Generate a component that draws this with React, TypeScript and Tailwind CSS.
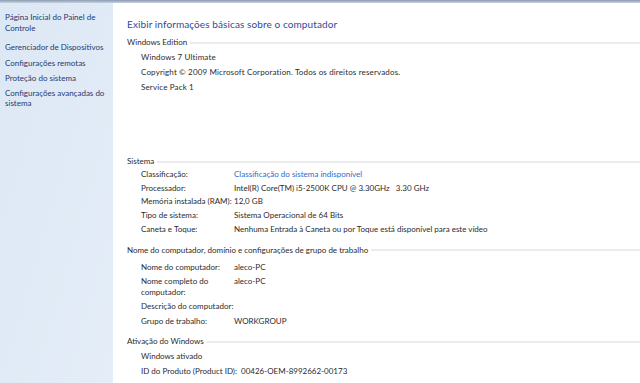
export default function App() {
  const sistema = [
    ["Classificação:", "Classificação do sistema indisponível", true],
    ["Processador:", "Intel(R) Core(TM) i5-2500K CPU @ 3.30GHz\u00a0\u00a0 3.30 GHz", false],
    ["Memória instalada (RAM):", "12,0 GB", false],
    ["Tipo de sistema:", "Sistema Operacional de 64 Bits", false],
    ["Caneta e Toque:", "Nenhuma Entrada à Caneta ou por Toque está disponível para este vídeo", false],
  ] as const;

  return (
    <div className="w-[640px] h-[383px] overflow-hidden bg-white text-[#2b2b2b] font-['Lato',sans-serif] text-[8px] flex flex-col">
      <div className="h-[3px] bg-gradient-to-b from-[#8a9bb2] to-[#c9d3df] shrink-0" />
      <div className="flex flex-1">
        <aside className="w-[113px] shrink-0 bg-gradient-to-br from-[#dde8f5] to-[#e4edf8] px-[5px] pt-[9px] text-[#1e3a6e] leading-[10.5px]">
          <div>Página Inicial do Painel de<br />Controle</div>
          <div className="mt-[9px] whitespace-nowrap">Gerenciador de Dispositivos</div>
          <div className="mt-[5px]">Configurações remotas</div>
          <div className="mt-[5px]">Proteção do sistema</div>
          <div className="mt-[4px]">Configurações avançadas do<br />sistema</div>
        </aside>
        <main className="flex-1 pl-[14px] whitespace-nowrap">
          <h1 className="text-[10px] text-[#2c4c9c] mt-[14px] leading-[14px] tracking-[0.1px]">
            Exibir informações básicas sobre o computador
          </h1>

          <Section title="Windows Edition" className="mt-[6px]" />
          <div className="pl-[14px] leading-[15px] mt-[2px] tracking-[0.15px]">
            <div>Windows 7 Ultimate</div>
            <div>Copyright © 2009 Microsoft Corporation. Todos os direitos reservados.</div>
            <div>Service Pack 1</div>
          </div>

          <Section title="Sistema" className="mt-[61px]" />
          <div className="pl-[14px] mt-[1px] leading-[13.7px]">
            {sistema.map(([k, v, link]) => (
              <div key={k} className="flex">
                <div className="w-[93px] shrink-0">{k}</div>
                <div className={link ? "text-[#2f6bc8]" : ""}>{v}</div>
              </div>
            ))}
          </div>

          <Section title="Nome do computador, domínio e configurações de grupo de trabalho" className="mt-[8px]" />
          <div className="pl-[14px] mt-[6px] leading-[10.5px] flex flex-col gap-[4px]">
            <div className="flex">
              <div className="w-[93px] shrink-0">Nome do computador:</div>
              <div>aleco-PC</div>
            </div>
            <div className="flex">
              <div className="w-[93px] shrink-0">Nome completo do<br />computador:</div>
              <div>aleco-PC</div>
            </div>
            <div className="flex">
              <div className="w-[93px] shrink-0">Descrição do computador:</div>
              <div></div>
            </div>
            <div className="flex">
              <div className="w-[93px] shrink-0">Grupo de trabalho:</div>
              <div>WORKGROUP</div>
            </div>
          </div>

          <Section title="Ativação do Windows" className="mt-[10px]" />
          <div className="pl-[14px] mt-[2px] leading-[15px]">
            <div>Windows ativado</div>
            <div>ID do Produto (Product ID):&nbsp; 00426-OEM-8992662-00173</div>
          </div>
        </main>
      </div>
    </div>
  );
}

function Section({ title, className = "" }: { title: string; className?: string }) {
  return (
    <div className={`flex items-center gap-[3px] leading-[11px] ${className}`}>
      <span className="whitespace-nowrap">{title}</span>
      <div className="flex-1 h-[2px] bg-[#ececec]" />
    </div>
  );
}
